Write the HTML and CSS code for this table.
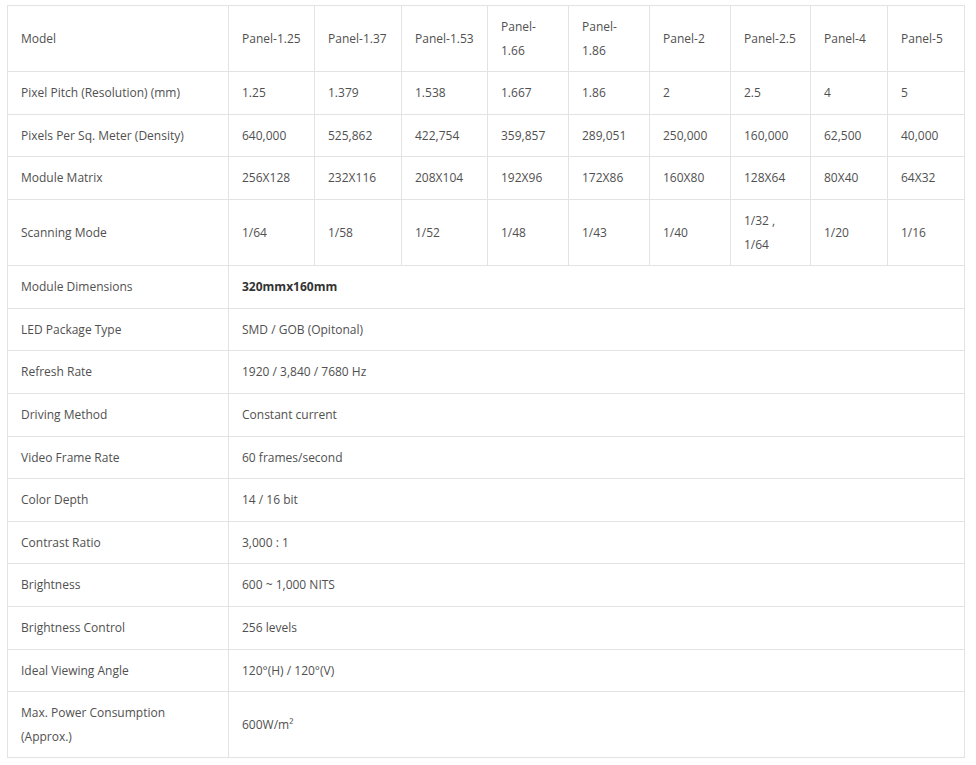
FILE: index.html
```html
<!DOCTYPE html>
<html lang="en">
<head>
<meta charset="utf-8">
<title>LED Panel Specifications</title>
<link rel="stylesheet" href="styles.css">
</head>
<body>
<div class="wrap">
<table class="spec">
<colgroup>
<col class="c-label">
<col class="c-86"><col class="c-87"><col class="c-86"><col class="c-81"><col class="c-81"><col class="c-81"><col class="c-80"><col class="c-77"><col class="c-77">
</colgroup>
<tbody>
<tr class="two"><td>Model</td><td>Panel-1.25</td><td>Panel-1.37</td><td>Panel-1.53</td><td>Panel-1.66</td><td>Panel-1.86</td><td>Panel-2</td><td>Panel-2.5</td><td>Panel-4</td><td>Panel-5</td></tr>
<tr><td>Pixel Pitch (Resolution) (mm)</td><td>1.25</td><td>1.379</td><td>1.538</td><td>1.667</td><td>1.86</td><td>2</td><td>2.5</td><td>4</td><td>5</td></tr>
<tr><td>Pixels Per Sq. Meter (Density)</td><td>640,000</td><td>525,862</td><td>422,754</td><td>359,857</td><td>289,051</td><td>250,000</td><td>160,000</td><td>62,500</td><td>40,000</td></tr>
<tr><td>Module Matrix</td><td>256X128</td><td>232X116</td><td>208X104</td><td>192X96</td><td>172X86</td><td>160X80</td><td>128X64</td><td>80X40</td><td>64X32</td></tr>
<tr><td>Scanning Mode</td><td>1/64</td><td>1/58</td><td>1/52</td><td>1/48</td><td>1/43</td><td>1/40</td><td>1/32 , 1/64</td><td>1/20</td><td>1/16</td></tr>
<tr><td>Module Dimensions</td><td colspan="9"><strong>320mmx160mm</strong></td></tr>
<tr><td>LED Package Type</td><td colspan="9">SMD / GOB (Opitonal)</td></tr>
<tr><td>Refresh Rate</td><td colspan="9">1920 / 3,840 / 7680 Hz</td></tr>
<tr><td>Driving Method</td><td colspan="9">Constant current</td></tr>
<tr><td>Video Frame Rate</td><td colspan="9">60 frames/second</td></tr>
<tr><td>Color Depth</td><td colspan="9">14 / 16 bit</td></tr>
<tr><td>Contrast Ratio</td><td colspan="9">3,000 : 1</td></tr>
<tr><td>Brightness</td><td colspan="9">600 ~ 1,000 NITS</td></tr>
<tr><td>Brightness Control</td><td colspan="9">256 levels</td></tr>
<tr><td>Ideal Viewing Angle</td><td colspan="9">120°(H) / 120°(V)</td></tr>
<tr><td>Max. Power Consumption (Approx.)</td><td colspan="9">600W/m²</td></tr>
</tbody>
</table>
</div>
</body>
</html>
```

FILE: styles.css
```css
html, body {
  margin: 0;
  padding: 0;
  background: #ffffff;
}

.wrap {
  padding: 5px 0 0 7px;
}

.spec {
  border-collapse: collapse;
  table-layout: fixed;
  width: 958px;
  font-family: "Open Sans", "Noto Sans", sans-serif;
  font-size: 12px;
  line-height: 23.6px;
  color: #505050;
}

.spec td {
  border: 1px solid #e3e3e3;
  padding: 9px 13px;
  vertical-align: middle;
  text-align: left;
}

.spec strong {
  font-weight: 700;
  color: #333333;
}

.c-label { width: 221px; }
.c-86 { width: 86px; }
.c-87 { width: 87px; }
.c-81 { width: 81px; }
.c-80 { width: 80px; }
.c-77 { width: 77px; }
```
